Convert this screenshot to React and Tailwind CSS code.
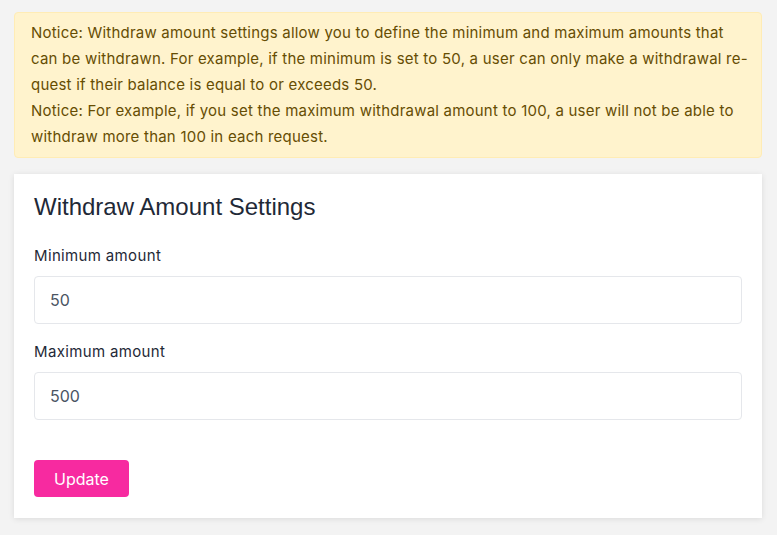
import React from 'react'

const notice = [
  'Notice: Withdraw amount settings allow you to define the minimum and maximum amounts that',
  'can be withdrawn. For example, if the minimum is set to 50, a user can only make a withdrawal re-',
  'quest if their balance is equal to or exceeds 50.',
  'Notice: For example, if you set the maximum withdrawal amount to 100, a user will not be able to',
  'withdraw more than 100 in each request.',
]

function Field({ label, value }) {
  return (
    <div className="flex flex-col gap-2">
      <label className="text-[15px] font-normal leading-6 tracking-[0.35px] text-[#1f2937]">{label}</label>
      <input
        type="text"
        defaultValue={value}
        className="h-12 w-full rounded-[4px] border border-[#e5e7eb] bg-white px-[15px] font-['Inter',sans-serif] text-[16px] text-[#4b5563] outline-none"
      />
    </div>
  )
}

export default function App() {
  return (
    <div className="min-h-[535px] bg-[#f3f3f3] pl-[14px] pr-[15px] py-3 font-['Inter',sans-serif] text-[15px]">
      <div className="rounded-[4px] border border-[#ffecb5] bg-[#fff3cd] px-4 py-[7px] leading-[26px] tracking-[0.22px] text-[#664d03]">
        {notice.map((line) => (
          <div key={line} className="whitespace-nowrap">{line}</div>
        ))}
      </div>

      <div className="mt-4 bg-white px-5 pt-5 pb-[21px] shadow-[0_1px_6px_rgba(0,0,0,0.1)]">
        <h2 className="font-['Liberation_Sans',Arial,sans-serif] text-[24px] leading-[26px] text-[#1f2937]">
          Withdraw Amount Settings
        </h2>
        <div className="mt-6 flex flex-col gap-4">
          <Field label="Minimum amount" value="50" />
          <Field label="Maximum amount" value="500" />
        </div>
        <button className="mt-10 h-[37px] rounded-[4px] bg-[#f72aa0] px-5 text-[16px] text-white">
          Update
        </button>
      </div>
    </div>
  )
}
